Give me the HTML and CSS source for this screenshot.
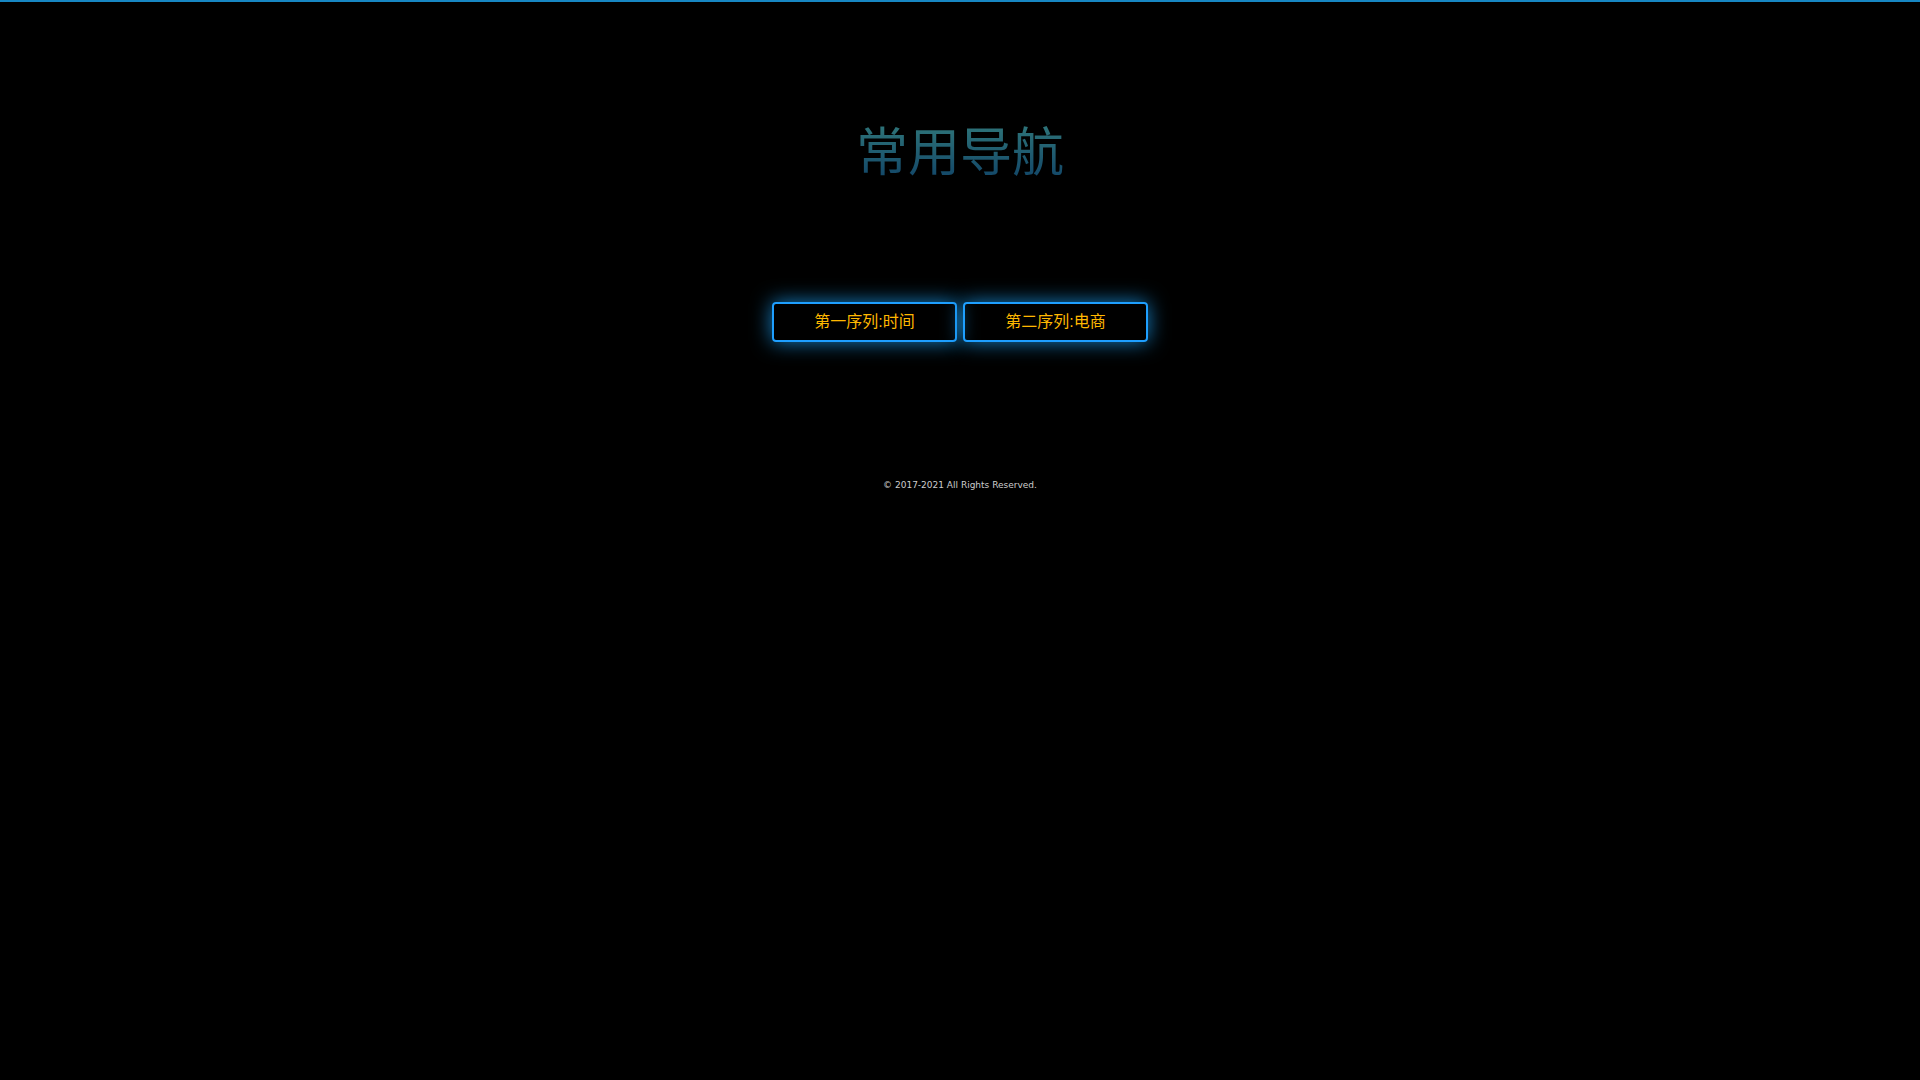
FILE: index.html
```html
<!DOCTYPE html>
<html lang="zh-CN">
<head>
<meta charset="utf-8">
<title>常用导航</title>
<link rel="stylesheet" href="styles.css">
</head>
<body>
<header class="header"><h1 class="title">常用导航</h1></header>
<nav class="nav">
<a class="nav-link" href="#time">第一序列:时间</a>
<a class="nav-link" href="#shop">第二序列:电商</a>
</nav>
<footer class="footer">© 2017-2021 All Rights Reserved.</footer>
</body>
</html>
```
FILE: styles.css
```css
* { box-sizing: border-box; }
body {
  margin: 0;
  min-height: 100vh;
  border-top: 2px solid #1787c3;
  background: #000;
  font-family: "DejaVu Sans", "Noto Sans CJK SC", sans-serif;
}
.header { padding-top: 113px; text-align: center; }
.title {
  display: inline-block;
  margin: 0;
  font-size: 52px;
  line-height: 76px;
  font-weight: 400;
  color: transparent;
  background: linear-gradient(#337c7c, #0c3c64);
  background-clip: text;
}
.nav {
  display: flex;
  flex-wrap: wrap;
  justify-content: center;
  gap: 6px;
  padding-top: 111px;
}
.nav-link {
  width: 185px;
  border: 2px solid #1e9fff;
  border-radius: 4px;
  box-shadow: 0 0 20px #1680c4;
  color: #ffb800;
  font-family: "Liberation Sans", "Noto Sans CJK SC", sans-serif;
  font-size: 16px;
  line-height: 36px;
  text-align: center;
  text-decoration: none;
}
.footer {
  padding-top: 134px;
  color: #ccc;
  font-size: 9px;
  line-height: 18px;
  text-align: center;
}
```
